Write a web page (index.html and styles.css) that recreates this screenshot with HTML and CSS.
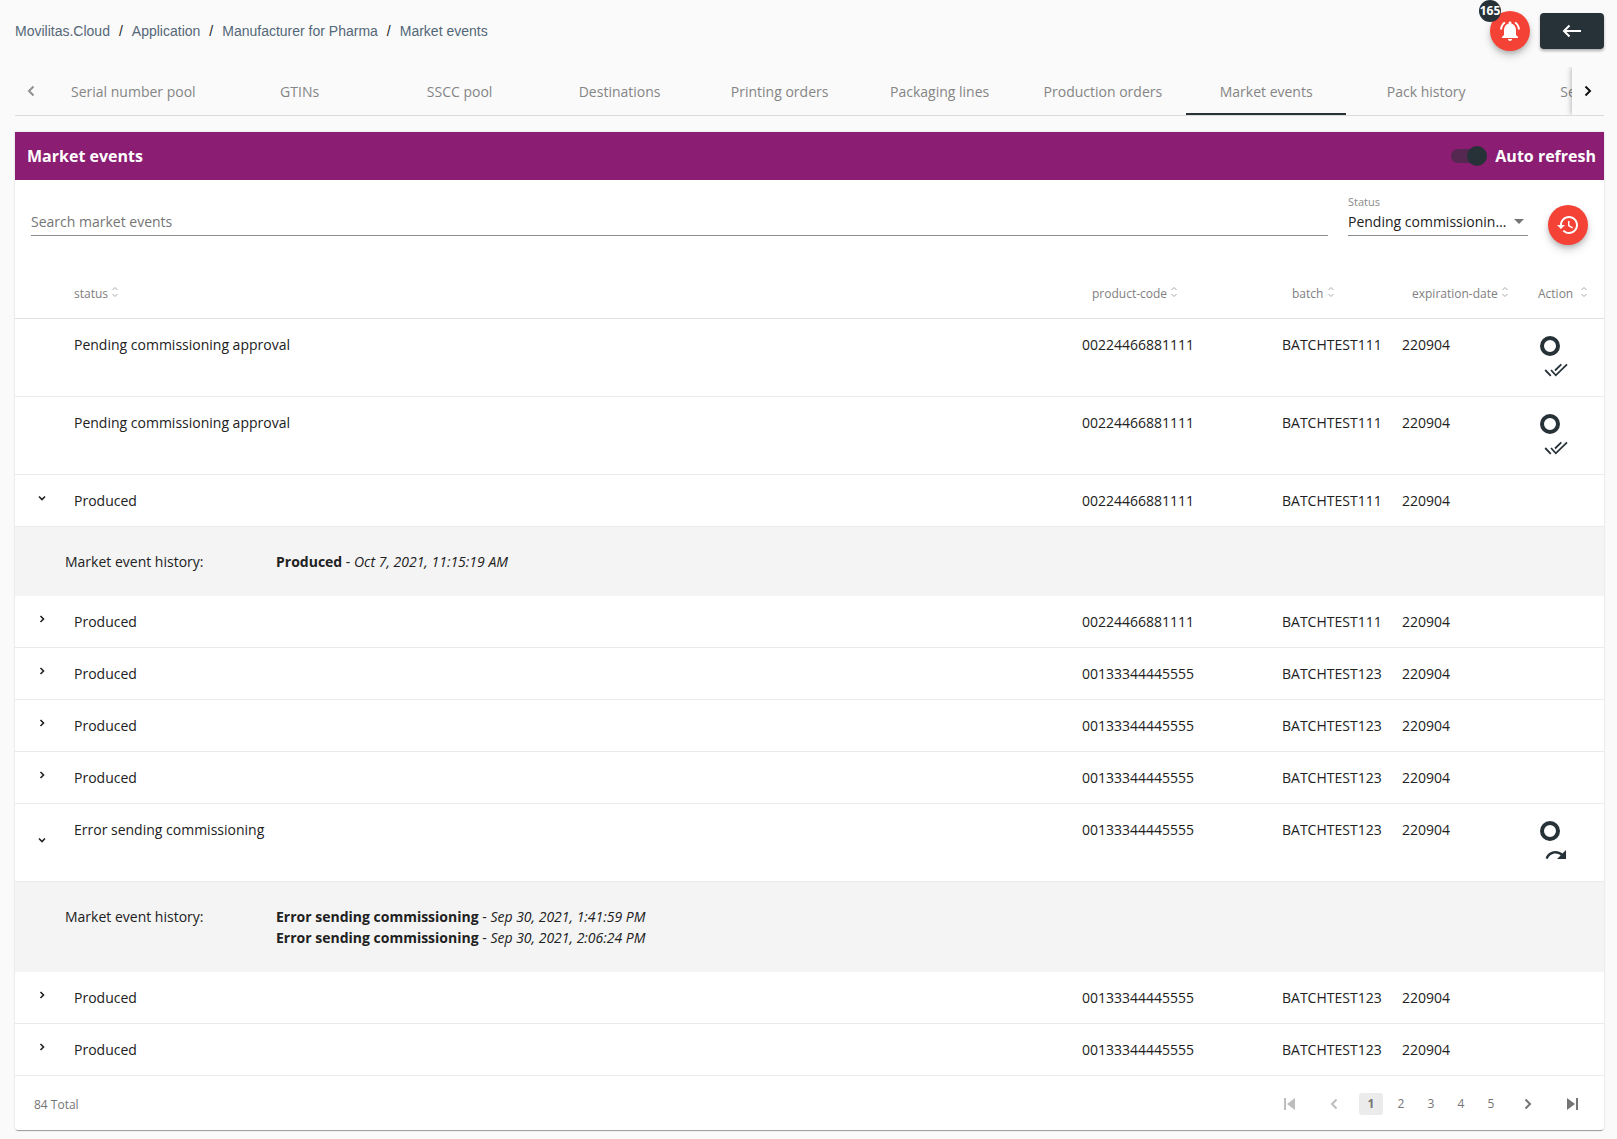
FILE: index.html
```html
<!DOCTYPE html>
<html lang="en">
<head>
<meta charset="utf-8">
<meta name="viewport" content="width=device-width, initial-scale=1">
<title>Market events</title>
<link rel="stylesheet" href="styles.css">
</head>
<body>
<svg class="sprite" aria-hidden="true">
  <symbol id="sort" viewBox="0 0 8 12"><path d="M1.5 4L4 1.5 6.500 4M1.500 8L4 10.500 6.500 8" fill="none" stroke="currentColor"/></symbol>
  <symbol id="left" viewBox="0 0 8 12"><path d="M6.500 1.500L2 6l4.500 4.500" fill="none" stroke="currentColor" stroke-width="2"/></symbol>
  <symbol id="right" viewBox="0 0 8 12"><path d="M1.500 1.500L6 6l-4.500 4.500" fill="none" stroke="currentColor" stroke-width="2"/></symbol>
  <symbol id="open" viewBox="0 0 8 8"><path d="M1 2.500L4 5.500 7 2.500" fill="none" stroke="currentColor" stroke-width="1.600"/></symbol>
  <symbol id="closed" viewBox="0 0 8 8"><path d="M2.500 1L5.500 4 2.500 7" fill="none" stroke="currentColor" stroke-width="1.600"/></symbol>
  <symbol id="ring" viewBox="0 0 24 24"><circle cx="12" cy="12" r="8" fill="none" stroke="currentColor" stroke-width="4"/></symbol>
  <symbol id="done-all" viewBox="0 0 24 24"><path d="M1.200 12l5.600 5.800M7 12l4.800 5.300L23 6.300M11 12.500l6.300-6.200" fill="none" stroke="currentColor" stroke-width="1.800"/></symbol>
  <symbol id="redo" viewBox="0 0 24 24"><path fill="currentColor" d="M18.400 10.600C16.550 8.990 14.150 8 11.500 8c-4.650 0-8.580 3.030-9.960 7.220L3.900 16c1.050-3.190 4.050-5.500 7.600-5.500 1.950 0 3.730.72 5.120 1.880L13 16h9V7l-3.600 3.600z"/></symbol>
</svg>

<header class="topbar">
  <nav class="crumbs" aria-label="Breadcrumb">
    <a href="#">Movilitas.Cloud</a><span>/</span><a href="#">Application</a><span>/</span><a href="#">Manufacturer for Pharma</a><span>/</span><a href="#">Market events</a>
  </nav>
  <button class="fab alerts" type="button" aria-label="Notifications">
    <svg width="24" height="24" viewBox="0 0 24 24"><path fill="currentColor" d="M7.580 4.080L6.150 2.650C3.750 4.480 2.170 7.300 2.030 10.500h2c.15-2.650 1.510-4.970 3.550-6.420zm12.390 6.420h2c-.15-3.200-1.730-6.020-4.120-7.850l-1.420 1.430c2.020 1.450 3.390 3.770 3.540 6.420zM18 11c0-3.070-1.640-5.640-4.500-6.320V4c0-.83-.67-1.500-1.500-1.500s-1.500.67-1.500 1.500v.68C7.630 5.360 6 7.920 6 11v5l-2 2v1h16v-1l-2-2v-5zm-6 11c.14 0 .27-.01.4-.04.65-.14 1.180-.58 1.440-1.180.1-.24.15-.5.15-.78h-4c.01 1.100.9 2 2.010 2z"/></svg>
    <span class="badge">165</span>
  </button>
  <button class="back" type="button" aria-label="Back">
    <svg width="20" height="14" viewBox="0 0 20 14"><path d="M19 7H2M7.500 1.500L2 7l5.500 5.500" fill="none" stroke="currentColor" stroke-width="2"/></svg>
  </button>
</header>

<nav class="tabs" aria-label="Sections">
  <button class="pager prev" type="button" aria-label="Previous tabs"><svg width="8" height="12"><use href="#left"/></svg></button>
  <div class="tablist">
    <a href="#">Serial number pool</a>
    <a href="#">GTINs</a>
    <a href="#">SSCC pool</a>
    <a href="#">Destinations</a>
    <a href="#">Printing orders</a>
    <a href="#">Packaging lines</a>
    <a href="#">Production orders</a>
    <a href="#" class="active" aria-current="page">Market events</a>
    <a href="#">Pack history</a>
    <a href="#">Settings</a>
  </div>
  <button class="pager next" type="button" aria-label="Next tabs"><svg width="8" height="12"><use href="#right"/></svg></button>
</nav>

<main class="card">
  <div class="card-head">
    <h1>Market events</h1>
    <label class="switch"><input type="checkbox" role="switch" checked>Auto refresh</label>
  </div>

  <div class="toolbar">
    <div class="field search">
      <input type="text" placeholder="Search market events" aria-label="Search market events">
    </div>
    <div class="field status">
      <label for="status">Status</label>
      <select id="status">
        <option>Pending commissioning approval</option>
        <option>Produced</option>
        <option>Error sending commissioning</option>
      </select>
      <svg class="caret" width="10" height="5" viewBox="0 0 10 5"><path fill="currentColor" d="M0 0h10L5 5z"/></svg>
    </div>
    <button class="fab" type="button" aria-label="History">
      <svg width="24" height="24" viewBox="0 0 24 24"><path fill="currentColor" d="M13 3c-4.970 0-9 4.030-9 9H1l3.890 3.890.07.14L9 12H6c0-3.870 3.130-7 7-7s7 3.130 7 7-3.130 7-7 7c-1.930 0-3.680-.79-4.940-2.060l-1.420 1.420C8.270 19.990 10.510 21 13 21c4.970 0 9-4.030 9-9s-4.030-9-9-9zm-1 5v5l4.280 2.540.72-1.210-3.500-2.080V8H12z"/></svg>
    </button>
  </div>

  <table class="events">
    <colgroup><col class="c-toggle"><col><col class="c-product"><col class="c-batch"><col class="c-date"><col class="c-action"></colgroup>
    <thead>
      <tr>
        <td></td>
        <th class="first" scope="col">status <svg width="8" height="12"><use href="#sort"/></svg></th>
        <th scope="col">product-code <svg width="8" height="12"><use href="#sort"/></svg></th>
        <th scope="col">batch <svg width="8" height="12"><use href="#sort"/></svg></th>
        <th scope="col">expiration-date <svg width="8" height="12"><use href="#sort"/></svg></th>
        <th class="first wide" scope="col">Action <svg width="8" height="12"><use href="#sort"/></svg></th>
      </tr>
    </thead>
    <tbody>
      <tr><td></td><td>Pending commissioning approval</td><td>00224466881111</td><td>BATCHTEST111</td><td>220904</td>
        <td class="actions"><button type="button" aria-label="Details"><svg width="24" height="24"><use href="#ring"/></svg></button><button type="button" aria-label="Approve"><svg width="24" height="24"><use href="#done-all"/></svg></button></td></tr>
      <tr><td></td><td>Pending commissioning approval</td><td>00224466881111</td><td>BATCHTEST111</td><td>220904</td>
        <td class="actions"><button type="button" aria-label="Details"><svg width="24" height="24"><use href="#ring"/></svg></button><button type="button" aria-label="Approve"><svg width="24" height="24"><use href="#done-all"/></svg></button></td></tr>
      <tr><td class="toggle"><button type="button" aria-label="Collapse"><svg width="8" height="8"><use href="#open"/></svg></button></td><td>Produced</td><td>00224466881111</td><td>BATCHTEST111</td><td>220904</td><td></td></tr>
      <tr class="detail"><td colspan="6"><div class="history"><span>Market event history:</span><div><b>Produced</b> - <i>Oct 7, 2021, 11:15:19 AM</i></div></div></td></tr>
      <tr><td class="toggle"><button type="button" aria-label="Expand"><svg width="8" height="8"><use href="#closed"/></svg></button></td><td>Produced</td><td>00224466881111</td><td>BATCHTEST111</td><td>220904</td><td></td></tr>
      <tr><td class="toggle"><button type="button" aria-label="Expand"><svg width="8" height="8"><use href="#closed"/></svg></button></td><td>Produced</td><td>00133344445555</td><td>BATCHTEST123</td><td>220904</td><td></td></tr>
      <tr><td class="toggle"><button type="button" aria-label="Expand"><svg width="8" height="8"><use href="#closed"/></svg></button></td><td>Produced</td><td>00133344445555</td><td>BATCHTEST123</td><td>220904</td><td></td></tr>
      <tr><td class="toggle"><button type="button" aria-label="Expand"><svg width="8" height="8"><use href="#closed"/></svg></button></td><td>Produced</td><td>00133344445555</td><td>BATCHTEST123</td><td>220904</td><td></td></tr>
      <tr><td class="toggle"><button type="button" aria-label="Collapse"><svg width="8" height="8"><use href="#open"/></svg></button></td><td>Error sending commissioning</td><td>00133344445555</td><td>BATCHTEST123</td><td>220904</td>
        <td class="actions"><button type="button" aria-label="Details"><svg width="24" height="24"><use href="#ring"/></svg></button><button type="button" aria-label="Resend"><svg width="24" height="24"><use href="#redo"/></svg></button></td></tr>
      <tr class="detail"><td colspan="6"><div class="history"><span>Market event history:</span><div><b>Error sending commissioning</b> - <i>Sep 30, 2021, 1:41:59 PM</i><br><b>Error sending commissioning</b> - <i>Sep 30, 2021, 2:06:24 PM</i></div></div></td></tr>
      <tr><td class="toggle"><button type="button" aria-label="Expand"><svg width="8" height="8"><use href="#closed"/></svg></button></td><td>Produced</td><td>00133344445555</td><td>BATCHTEST123</td><td>220904</td><td></td></tr>
      <tr><td class="toggle"><button type="button" aria-label="Expand"><svg width="8" height="8"><use href="#closed"/></svg></button></td><td>Produced</td><td>00133344445555</td><td>BATCHTEST123</td><td>220904</td><td></td></tr>
    </tbody>
  </table>

  <footer class="card-foot">
    <span>84 Total</span>
    <nav class="pages" aria-label="Pages">
      <button class="step off" type="button" aria-label="First page"><svg width="12" height="12" viewBox="0 0 12 12"><path fill="currentColor" d="M0 0h2v12H0zM11 0v12L3 6z"/></svg></button>
      <button class="step off" type="button" aria-label="Previous page"><svg width="8" height="12"><use href="#left"/></svg></button>
      <a class="current" href="#" aria-current="page">1</a>
      <a href="#">2</a>
      <a href="#">3</a>
      <a href="#">4</a>
      <a href="#">5</a>
      <button class="step" type="button" aria-label="Next page"><svg width="8" height="12"><use href="#right"/></svg></button>
      <button class="step" type="button" aria-label="Last page"><svg width="12" height="12" viewBox="0 0 12 12"><path fill="currentColor" d="M10 0h2v12h-2zM1 0v12l8-6z"/></svg></button>
    </nav>
  </footer>
</main>
</body>
</html>
```
FILE: styles.css
```css
:root {
  --ink: #212121;
  --dark: #263238;
  --muted: #757575;
  --red: #f44336;
  --purple: #8b1d72;
  --line: #e0e0e0;
  --soft-line: #ebebeb;
}

* { box-sizing: border-box; }

body {
  margin: 0;
  padding: 0 13px 8px 15px;
  background: #fafafa;
  color: var(--ink);
  font: 14px/21px "Open Sans", "Noto Sans", sans-serif;
}

button {
  display: flex;
  align-items: center;
  justify-content: center;
  padding: 0;
  border: 0;
  background: none;
  color: inherit;
  font: inherit;
  cursor: pointer;
}

a { color: inherit; text-decoration: none; }
svg { display: block; }
.sprite { display: none; }

/* Top bar */
.topbar {
  display: flex;
  align-items: center;
  gap: 10px;
  padding: 11px 0 16px;
}

.crumbs {
  display: flex;
  flex: 1;
  gap: 9px;
  color: #546778;
  font: 14px/20px "Liberation Sans", Arial, sans-serif;
}

.crumbs span { color: var(--ink); }

.fab {
  position: relative;
  flex: none;
  width: 40px;
  height: 40px;
  border-radius: 50%;
  background: var(--red);
  color: #fff;
  box-shadow: 0 3px 5px -1px rgba(0, 0, 0, .2), 0 5px 9px rgba(0, 0, 0, .16);
}

.badge {
  position: absolute;
  top: -11px;
  left: -11px;
  width: 22px;
  height: 22px;
  border-radius: 50%;
  background: var(--dark);
  font-size: 12px;
  font-weight: 700;
  line-height: 22px;
  text-align: center;
}

.back {
  width: 64px;
  height: 36px;
  border-radius: 4px;
  background: var(--dark);
  color: #fff;
  box-shadow: 0 2px 3px rgba(0, 0, 0, .3);
}

/* Tabs */
.tabs {
  display: flex;
  height: 49px;
  border-bottom: 1px solid #dcdcdc;
  overflow: hidden;
}

.pager { flex: none; width: 32px; }
.prev { color: #909090; }

.next {
  z-index: 1;
  background: #fafafa;
  color: #111;
  box-shadow: 0 0 6px rgba(0, 0, 0, .35);
}

.tablist {
  display: flex;
  flex: 1;
  min-width: 0;
  overflow: hidden;
}

.tablist a {
  flex: none;
  min-width: 160px;
  padding: 4px 24px 0;
  border-bottom: 2px solid transparent;
  color: #858585;
  line-height: 42px;
  text-align: center;
}

.tablist .active { border-color: var(--dark); }

/* Card */
.card {
  margin-top: 16px;
  border-radius: 0 0 3px 3px;
  background: #fff;
  box-shadow: 0 2px 1px -1px rgba(0, 0, 0, .35), 0 0 2px rgba(0, 0, 0, .2);
}

.card-head {
  display: flex;
  align-items: center;
  justify-content: space-between;
  height: 48px;
  padding: 0 8px 0 12px;
  background: var(--purple);
  color: #fff;
  font-size: 16px;
  font-weight: 700;
}

.card-head h1 { margin: 0; font: inherit; }
.switch { display: flex; align-items: center; gap: 8px; }

.switch input {
  display: flex;
  align-items: center;
  justify-content: flex-end;
  width: 36px;
  height: 14px;
  margin: 0;
  border-radius: 7px;
  background: rgba(38, 50, 56, .54);
  appearance: none;
}

.switch input::before {
  content: "";
  width: 20px;
  height: 20px;
  flex: none;
  border-radius: 50%;
  background: var(--dark);
}

.toolbar {
  display: flex;
  align-items: flex-end;
  gap: 20px;
  padding: 15px 16px 25px;
}

.field { padding-bottom: 9px; }
.search { flex: 1; }
.status { position: relative; width: 180px; }

.status label {
  display: block;
  color: #8a8a8a;
  font-size: 11px;
  line-height: 14px;
}

.field input,
.field select {
  display: block;
  width: 100%;
  height: 27px;
  padding: 0 0 2px;
  border: 0;
  border-bottom: 1px solid #8c8c8c;
  border-radius: 0;
  outline: 0;
  background: none;
  color: var(--ink);
  font: inherit;
  appearance: none;
}

.field input::placeholder { color: var(--muted); }

.field select {
  padding-right: 20px;
  overflow: hidden;
  text-overflow: ellipsis;
  white-space: nowrap;
}

.caret {
  position: absolute;
  top: 24px;
  right: 4px;
  color: var(--muted);
  pointer-events: none;
}

/* Events table */
.events {
  width: 100%;
  border-collapse: separate;
  border-spacing: 0;
  table-layout: fixed;
}

.c-toggle { width: 49px; }
.c-product { width: 200px; }
.c-batch { width: 120px; }
.c-date { width: 136px; }
.c-action { width: 76px; }

.events td {
  padding: 15px 10px;
  border-bottom: 1px solid var(--soft-line);
  vertical-align: top;
  overflow: hidden;
  white-space: nowrap;
}

.events thead td,
.events th {
  height: 49px;
  padding: 0 0 2px 20px;
  border-bottom: 1px solid var(--line);
  color: #808080;
  font-size: 12px;
  font-weight: 400;
  text-align: left;
  white-space: nowrap;
}

.events .first { padding-left: 10px; }
.events th svg { display: inline-block; color: #a8a8a8; }
.events .wide svg { margin-left: 4px; }

.events .toggle {
  padding: 0 0 6px 23px;
  vertical-align: middle;
}

.events .actions {
  padding-bottom: 14px;
  color: var(--dark);
}

.actions button + button { margin-left: 6px; }

.detail td {
  padding: 0;
  border: 0;
  background: #f4f4f4;
}

.history {
  display: grid;
  grid-template-columns: 211px 1fr;
  padding: 24px 50px;
}

/* Footer */
.card-foot {
  display: flex;
  align-items: center;
  justify-content: space-between;
  height: 54px;
  padding: 2px 13px 0 19px;
  color: var(--muted);
  font-size: 12px;
}

.pages { display: flex; align-items: center; gap: 6px; }

.pages a {
  width: 24px;
  border-radius: 3px;
  line-height: 22px;
  text-align: center;
}

.pages .current { background: #ebebeb; font-weight: 700; }
.step { width: 38px; height: 22px; }
.step.off { color: #bdbdbd; }
```
